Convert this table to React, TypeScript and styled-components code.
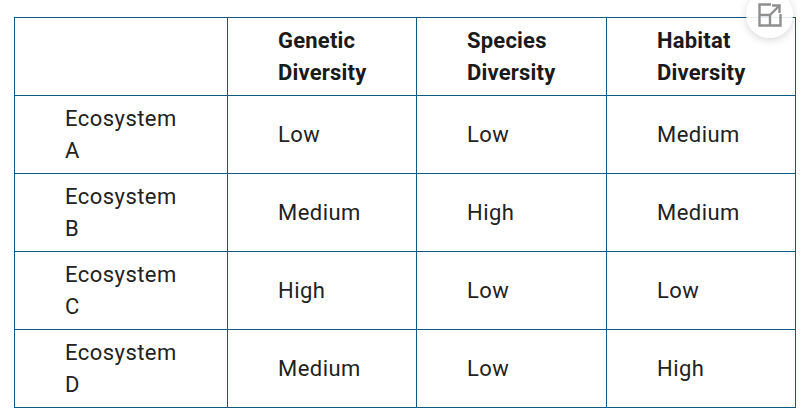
import React from "react";
import styled, { createGlobalStyle } from "styled-components";

interface EcoRow {
  name: string;
  genetic: string;
  species: string;
  habitat: string;
}

const rows: EcoRow[] = [
  { name: "Ecosystem A", genetic: "Low", species: "Low", habitat: "Medium" },
  { name: "Ecosystem B", genetic: "Medium", species: "High", habitat: "Medium" },
  { name: "Ecosystem C", genetic: "High", species: "Low", habitat: "Low" },
  { name: "Ecosystem D", genetic: "Medium", species: "Low", habitat: "High" },
];

// enlarge icon drawn as a small svg
const ExpandIcon: React.FC = () => (
  <svg width="24" height="24" viewBox="0 0 24 24" fill="none">
    <g stroke="#8f8f8f" strokeWidth="2.4">
      <path d="M13 1.5H1.5V22.5H22.5V11" />
      <path d="M1.5 12H12V22.5" />
      <path d="M12 12L21.5 2.5" />
      <path d="M14 2.5H21.5V10" />
    </g>
  </svg>
);

const App: React.FC = () => {
  return (
    <>
      <GlobalStyle />
      <Page>
        <Table>
          <colgroup>
            <col style={{ width: 213 }} />
            <col style={{ width: 189 }} />
            <col style={{ width: 190 }} />
            <col style={{ width: 189 }} />
          </colgroup>
          <thead>
            <tr>
              <HeadCell />
              <HeadCell>Genetic Diversity</HeadCell>
              <HeadCell>Species Diversity</HeadCell>
              <HeadCell>Habitat Diversity</HeadCell>
            </tr>
          </thead>
          <tbody>
            {rows.map((r) => (
              <tr key={r.name}>
                <Cell>{r.name}</Cell>
                <Cell>{r.genetic}</Cell>
                <Cell>{r.species}</Cell>
                <Cell>{r.habitat}</Cell>
              </tr>
            ))}
          </tbody>
        </Table>
        <ExpandButton aria-label="Expand">
          <ExpandIcon />
        </ExpandButton>
      </Page>
    </>
  );
};

const GlobalStyle = createGlobalStyle`
  html, body {
    margin: 0;
    padding: 0;
    background: #ffffff;
  }
  body {
    font-family: Roboto, "Liberation Sans", Arial, sans-serif;
    color: #1f1f1f;
  }
`;

const Page = styled.div`
  position: relative;
  width: 805px;
  height: 415px;
  padding: 17px 0 0 14px;
  box-sizing: border-box;
  overflow: hidden;
`;

const Table = styled.table`
  width: 782px;
  table-layout: fixed;
  border-collapse: collapse;
  font-size: 22px;
  line-height: 32px;
  letter-spacing: 0.45px;
`;

const HeadCell = styled.th`
  height: 78px;
  box-sizing: border-box;
  padding: 6px 40px 6px 50px;
  border: 1.5px solid #135a80;
  text-align: left;
  vertical-align: middle;
  font-weight: 700;
  letter-spacing: 0.2px;
  color: #1a1a1a;
`;

const Cell = styled.td`
  height: 78px;
  box-sizing: border-box;
  padding: 6px 20px 6px 50px;
  border: 1.5px solid #135a80;
  text-align: left;
  vertical-align: middle;
  font-weight: 400;
  color: #222222;

  &:first-child {
    padding-right: 36px;
  }
`;

const ExpandButton = styled.button`
  position: absolute;
  top: -9px;
  left: 746px;
  width: 47px;
  height: 47px;
  border: none;
  border-radius: 50%;
  background: rgba(255, 255, 255, 0.88);
  box-shadow: 0 2px 8px rgba(0, 0, 0, 0.16);
  display: flex;
  align-items: center;
  justify-content: center;
  padding: 0;
  padding-top: 1px;
  cursor: pointer;
`;

export default App;
